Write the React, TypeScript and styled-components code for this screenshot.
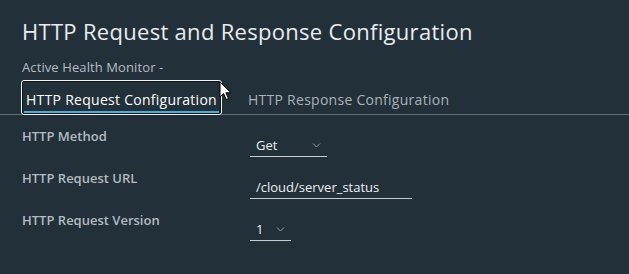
import React from 'react';
import styled, {createGlobalStyle} from 'styled-components';

const GlobalStyle = createGlobalStyle`
	html, body {
		margin: 0;
		padding: 0;
		background: #22303a;
	}
	body {
		font-family: "Open Sans", "Noto Sans", sans-serif;
		width: 629px;
		height: 274px;
		overflow: hidden;
	}
`;

const tabs = ['HTTP Request Configuration', 'HTTP Response Configuration'];

const fields = [
	{label: 'HTTP Method', kind: 'select', value: 'Get', width: 77},
	{label: 'HTTP Request URL', kind: 'input', value: '/cloud/server_status', width: 162},
	{label: 'HTTP Request Version', kind: 'select', value: '1', width: 41},
];

const Chevron = () => (
	<svg width="9" height="6" viewBox="0 0 9 6" fill="none">
		<path d="M1 1.5l3.5 3.5 3.5-3.5" stroke="#93a0a7" strokeWidth="1" />
	</svg>
);

const Cursor = () => (
	<svg width="13" height="20" viewBox="0 0 13 20">
		<path
			d="M1 1v15l3.6-3.4 2.6 5.9 2.3-1-2.6-5.7H12z"
			fill="#fff"
			stroke="#000"
			strokeWidth="1"
			strokeLinejoin="round"
		/>
	</svg>
);

export default function App() {
	return (
		<Page>
			<GlobalStyle />
			<Title>HTTP Request and Response Configuration</Title>
			<Subtitle>Active Health Monitor -</Subtitle>
			<TabBar>
				{tabs.map((t, i) => (
					<Tab key={t} $active={i === 0}>
						{t}
					</Tab>
				))}
				<CursorWrap>
					<Cursor />
				</CursorWrap>
			</TabBar>
			<Form>
				{fields.map(({label, kind, value, width}) => (
					<React.Fragment key={label}>
						<Label>{label}</Label>
						<Control $width={width}>
							<span>{value}</span>
							{kind === 'select' && <Chevron />}
						</Control>
					</React.Fragment>
				))}
			</Form>
		</Page>
	);
}

const Page = styled.div`
	position: relative;
	padding-top: 17px;
`;

const Title = styled.h1`
	margin: 0 0 0 22px;
	font-size: 22px;
	line-height: 28px;
	font-weight: 400;
	letter-spacing: 0.3px;
	color: #e9ecee;
`;

const Subtitle = styled.div`
	margin: 14px 0 0 22px;
	font-size: 13px;
	line-height: 16px;
	letter-spacing: 0.1px;
	color: #b5bdc2;
`;

const TabBar = styled.div`
	position: relative;
	display: flex;
	gap: 21px;
	margin-top: 5px;
	padding-left: 21px;
	height: 34px;
	border-bottom: 1px solid #5f6e77;
`;

const Tab = styled.div<{$active?: boolean}>`
	position: relative;
	display: flex;
	align-items: center;
	box-sizing: border-box;
	height: 35px;
	padding: 3px 4px 0;
	font-size: 14px;
	letter-spacing: 0.27px;
	color: ${({$active}) => ($active ? '#ffffff' : '#a9b3b9')};
	border: 1px solid ${({$active}) => ($active ? '#f2f2f2' : 'transparent')};
	border-radius: 3px;
	box-shadow: ${({$active}) => ($active ? 'inset 0 0 0 1px #0e161b' : 'none')};

	&::after {
		content: '';
		display: ${({$active}) => ($active ? 'block' : 'none')};
		position: absolute;
		left: 2px;
		right: 2px;
		bottom: 1px;
		height: 2px;
		background: #49afd9;
	}
`;

const CursorWrap = styled.div`
	position: absolute;
	left: 219px;
	top: 1px;
	line-height: 0;
`;

const Form = styled.div`
	display: grid;
	grid-template-columns: 228px auto;
	row-gap: 13px;
	padding: 13px 0 0 22px;
	justify-items: start;
`;

const Label = styled.div`
	font-size: 13px;
	line-height: 16px;
	font-weight: 600;
	color: #b3bbc0;
`;

const Control = styled.div<{$width: number}>`
	display: flex;
	align-items: center;
	justify-content: space-between;
	box-sizing: border-box;
	margin-top: 6px;
	width: ${({$width}) => $width}px;
	height: 23px;
	padding: 0 6px 0 6px;
	font-size: 13px;
	color: #eef1f2;
	border-bottom: 1px solid #c6cdd1;
`;
